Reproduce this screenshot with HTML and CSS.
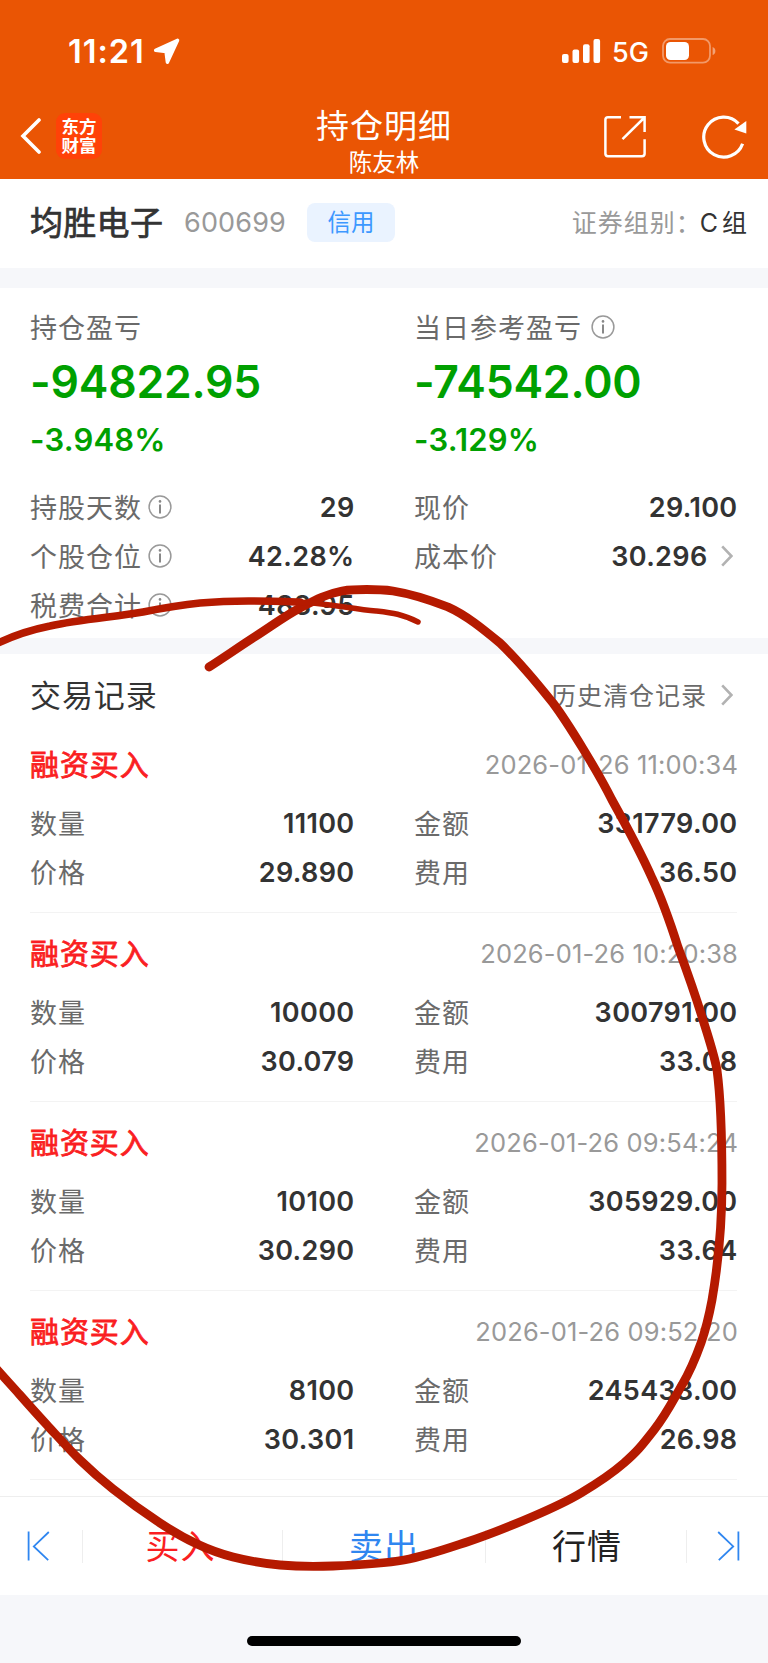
FILE: index.html
```
<!DOCTYPE html>
<html lang="zh-CN">
<head>
<meta charset="utf-8">
<meta name="viewport" content="width=768">
<title>持仓明细</title>
<link rel="stylesheet" href="styles.css">
</head>
<body>

<svg class="defs" width="0" height="0">
  <symbol id="info" viewBox="0 0 24 24">
    <circle cx="12" cy="12" r="10.9" fill="none" stroke="#999" stroke-width="1.5"/>
    <circle cx="12" cy="6.4" r="1.3" fill="#888"/>
    <path d="M12 9.6V18.6" stroke="#888" stroke-width="2"/>
  </symbol>
  <symbol id="arrow" viewBox="0 0 12 22">
    <path d="M1.2 1.4L10.4 11L1.2 20.6" fill="none" stroke="#b2b2b2" stroke-width="2.6"/>
  </symbol>
</svg>

<header class="header">
  <div class="status">
    <span class="time">11:21</span>
    <svg class="location" width="27" height="27" viewBox="0 0 27 27"><path d="M24.6 2.2L2.6 12.2L13 13.6L14.4 24.2Z" fill="#fff" stroke="#fff" stroke-width="3.4" stroke-linejoin="round"/></svg>
    <svg class="signal" width="39" height="25" viewBox="0 0 39 25" fill="#fff">
      <rect x="0" y="15" width="6.6" height="9" rx="2"/>
      <rect x="10.5" y="10.4" width="6.6" height="13.6" rx="2"/>
      <rect x="21" y="5.2" width="6.6" height="18.8" rx="2"/>
      <rect x="31.5" y="0" width="6.6" height="24" rx="2"/>
    </svg>
    <span class="network">5G</span>
    <svg class="battery" width="55" height="26" viewBox="0 0 55 26">
      <rect x="1" y="1" width="47" height="23.6" rx="7" fill="none" stroke="#fff" stroke-opacity=".4" stroke-width="1.8"/>
      <rect x="4" y="4" width="23" height="18" rx="4.5" fill="#fff"/>
      <path d="M50.6 9Q53.4 10 53.4 13Q53.4 16 50.6 17Z" fill="#fff" fill-opacity=".45"/>
    </svg>
  </div>
  <div class="navbar">
    <div class="nav-left">
      <svg width="22" height="36" viewBox="0 0 22 36"><path d="M19 2L3 18L19 34" fill="none" stroke="#fff" stroke-width="3.6" stroke-linecap="round"/></svg>
      <div class="logo"><span>东方</span><span>财富</span></div>
    </div>
    <div class="nav-title">
      <h1>持仓明细</h1>
      <p>陈友林</p>
    </div>
    <div class="nav-right">
      <svg width="44" height="44" viewBox="0 0 44 44" fill="none" stroke="#fff" stroke-width="2.5"><path d="M18 2.2H5Q2.4 2.2 2.4 4.8V38.8Q2.4 41.2 5 41.2H39Q41.6 41.2 41.6 38.8V24.2M26.5 2.2H41.6V17M41 3L19.5 24.2"/></svg>
      <svg width="46" height="46" viewBox="0 0 46 46"><path d="M36.5 9.6A20 20 0 1 0 40.6 29.8" fill="none" stroke="#fff" stroke-width="3.2"/><path d="M44.3 7V19.4L32.4 15.4Z" fill="#fff"/></svg>
    </div>
  </div>
</header>

<section class="stock">
  <h2>均胜电子</h2>
  <span class="code">600699</span>
  <span class="badge">信用</span>
  <span class="group">证券组别：</span>
  <span class="group-value">C 组</span>
</section>

<section class="summary">
  <div class="col">
    <div class="label">持仓盈亏</div>
    <div class="profit">-94822.95</div>
    <div class="percent">-3.948%</div>
    <div class="row"><span class="label">持股天数<svg class="info"><use href="#info"/></svg></span><b>29</b></div>
    <div class="row"><span class="label">个股仓位<svg class="info"><use href="#info"/></svg></span><b>42.28%</b></div>
    <div class="row"><span class="label">税费合计<svg class="info"><use href="#info"/></svg></span><b>488.95</b></div>
  </div>
  <div class="col">
    <div class="label day">当日参考盈亏<svg class="info"><use href="#info"/></svg></div>
    <div class="profit">-74542.00</div>
    <div class="percent">-3.129%</div>
    <div class="row"><span class="label">现价</span><b>29.100</b></div>
    <div class="row"><span class="label">成本价</span><b>30.296</b><svg class="arrow"><use href="#arrow"/></svg></div>
  </div>
</section>

<section class="records">
  <div class="records-head">
    <h3>交易记录</h3>
    <span class="history">历史清仓记录</span>
    <svg class="arrow"><use href="#arrow"/></svg>
  </div>

  <div class="record">
    <div class="record-head"><h4>融资买入</h4><time>2026-01-26 11:00:34</time></div>
    <div class="record-body">
      <div class="row"><span class="label">数量</span><b>11100</b></div>
      <div class="row"><span class="label">金额</span><b>331779.00</b></div>
      <div class="row"><span class="label">价格</span><b>29.890</b></div>
      <div class="row"><span class="label">费用</span><b>36.50</b></div>
    </div>
  </div>

  <div class="record">
    <div class="record-head"><h4>融资买入</h4><time>2026-01-26 10:20:38</time></div>
    <div class="record-body">
      <div class="row"><span class="label">数量</span><b>10000</b></div>
      <div class="row"><span class="label">金额</span><b>300791.00</b></div>
      <div class="row"><span class="label">价格</span><b>30.079</b></div>
      <div class="row"><span class="label">费用</span><b>33.08</b></div>
    </div>
  </div>

  <div class="record">
    <div class="record-head"><h4>融资买入</h4><time>2026-01-26 09:54:24</time></div>
    <div class="record-body">
      <div class="row"><span class="label">数量</span><b>10100</b></div>
      <div class="row"><span class="label">金额</span><b>305929.00</b></div>
      <div class="row"><span class="label">价格</span><b>30.290</b></div>
      <div class="row"><span class="label">费用</span><b>33.64</b></div>
    </div>
  </div>

  <div class="record">
    <div class="record-head"><h4>融资买入</h4><time>2026-01-26 09:52:20</time></div>
    <div class="record-body">
      <div class="row"><span class="label">数量</span><b>8100</b></div>
      <div class="row"><span class="label">金额</span><b>245433.00</b></div>
      <div class="row"><span class="label">价格</span><b>30.301</b></div>
      <div class="row"><span class="label">费用</span><b>26.98</b></div>
    </div>
  </div>
</section>

<nav class="tabs">
  <a class="prev"><svg width="24" height="30" viewBox="0 0 24 30" fill="none" stroke="#2f86f0" stroke-width="1.8"><path d="M1.6 .5V29.5M21.8 1L6.8 15.4L21.2 29.2"/></svg></a>
  <a class="buy">买入</a>
  <a class="sell">卖出</a>
  <a class="quote">行情</a>
  <a class="next"><svg width="24" height="30" viewBox="0 0 24 30" fill="none" stroke="#2f86f0" stroke-width="1.8"><path d="M22.4 .5V29.5M2.2 1L17.2 15.4L2.8 29.2"/></svg></a>
</nav>

<footer class="home"><span class="home-bar"></span></footer>

<!-- pen mark over the records -->
<svg class="pen" width="768" height="1663" viewBox="0 0 768 1663">
  <path class="thick" d="M209 667C220 660 240.8 645.8 256 636S286 615.3 300 608S326 594 342 591C355 589 378 589 393 591C412 594 430 600 448 607C466 615 483 629 500 643C520 662 537 683 553 703C568 723 598 772 612 800C627 827 641 853 652 878C663 901 670 922 678 947C688 974 696 997 703 1020C710 1042 714 1054 717 1070C721 1100 722 1150 722 1183C722 1220 718 1265 712 1300C709 1316 706 1329 701 1343C696 1357 690.8 1370 682 1385S666.7 1413.7 654 1430S637.2 1451.5 624 1463S596 1484 581 1493S553 1507.8 534 1516S488.7 1534.8 467 1542S426.3 1556 404 1560S353.7 1565.2 333 1566S296.7 1566.5 280 1565S246.8 1560.5 233 1557S209.2 1549.7 197 1544S174 1532.2 160 1523S126.3 1499.5 113 1489S91 1470.7 80 1460S57 1435.8 47 1425S28.8 1405 20 1395S0 1373 -6 1366"/>
  <path class="mid" d="M-6 645C10 637 30 630 50 626C80 619 115 617 143 612C163 608 180 605 200 603C235 600 265 601 300 602"/>
  <path class="thin" d="M290 602C325 602 350 609 376 611C393 613 402 614 418 622"/>
</svg>

</body>
</html>
```
FILE: styles.css
```
* {
  box-sizing: border-box;
  margin: 0;
  padding: 0;
}

body {
  position: relative;
  width: 768px;
  height: 1663px;
  overflow: hidden;
  background: #f6f7fa;
  color: #333;
  font-family: Inter, "Noto Sans CJK SC", sans-serif;
  font-size: 27px;
}

svg {
  display: block;
  flex: none;
}

.defs {
  position: absolute;
}

/* header */
.header {
  height: 179px;
  background: #ea5504;
  color: #fff;
}

.status {
  display: flex;
  align-items: center;
  height: 102px;
  padding: 0 51px 0 68px;
}

.time {
  width: 77px;
  padding-top: 1px;
  font-size: 32.5px;
  font-weight: 600;
  letter-spacing: 1px;
}

.location {
  margin-left: 8px;
}

.signal {
  margin-left: auto;
}

.network {
  width: 49px;
  padding: 2px 0 0 11px;
  font-weight: 500;
  font-size: 27px;
}

.battery {
  margin-left: 12px;
}

.navbar {
  display: grid;
  grid-template-columns: 1fr 200px 1fr;
  height: 77px;
}

.nav-left {
  display: flex;
  align-items: center;
  gap: 14px;
  height: 68px;
  padding-left: 20px;
}

.logo {
  display: flex;
  flex-direction: column;
  align-items: center;
  justify-content: center;
  width: 46px;
  height: 46px;
  padding-bottom: 1px;
  border-radius: 9px;
  background: #ff4208;
  font-size: 17.5px;
  font-weight: 700;
  line-height: 19px;
}

.nav-title {
  padding-top: 1px;
  text-align: center;
}

.nav-title h1 {
  font-size: 33px;
  font-weight: 400;
  line-height: 46px;
  letter-spacing: 1px;
  white-space: nowrap;
}

.nav-title p {
  font-size: 23.5px;
  line-height: 28px;
}

.nav-right {
  display: flex;
  justify-content: flex-end;
  align-items: center;
  gap: 55px;
  height: 69px;
  padding-right: 20px;
}

/* stock name */
.stock {
  display: flex;
  align-items: center;
  height: 89px;
  padding: 0 21px 3px 30px;
  background: #fff;
}

.stock h2 {
  width: 154px;
  padding-bottom: 2px;
  font-size: 33px;
  font-weight: 400;
  letter-spacing: .3px;
  -webkit-text-stroke: .7px;
}

.code {
  width: 123px;
  color: #999;
  letter-spacing: .15px;
}

.badge {
  width: 88px;
  height: 39px;
  border-radius: 8px;
  background: #eaf3ff;
  color: #3d98ff;
  font-size: 23.5px;
  line-height: 40px;
  text-align: center;
}

.group {
  margin: 0 -2px 0 auto;
  padding-bottom: 2px;
  color: #999;
  font-size: 25px;
  letter-spacing: 1px;
  white-space: nowrap;
}

.group-value {
  padding-bottom: 2px;
  font-size: 25px;
  word-spacing: -3px;
  white-space: nowrap;
}

/* profit and loss */
.summary {
  display: grid;
  grid-template-columns: 324px 323px;
  column-gap: 60px;
  height: 350px;
  margin-top: 20px;
  padding: 15px 31px 0 30px;
  background: #fff;
}

.label {
  display: flex;
  align-items: center;
  height: 49px;
  padding-bottom: 3px;
  color: #6a6a6a;
  letter-spacing: 1px;
  white-space: nowrap;
}

.info {
  width: 24px;
  height: 24px;
  margin: 2px 0 0 6px;
}

.day .info {
  margin-left: 9px;
}

.profit {
  height: 60px;
  color: #00a000;
  font-size: 44.5px;
  font-weight: 600;
  line-height: 60px;
  letter-spacing: -.2px;
}

.percent {
  height: 71px;
  color: #00a000;
  font-size: 31px;
  font-weight: 600;
  line-height: 56px;
  letter-spacing: .2px;
}

.row {
  display: flex;
  align-items: center;
  height: 49px;
}

.row b {
  margin: 0 -.5px 0 auto;
  font-weight: 600;
  letter-spacing: .35px;
}

.arrow {
  width: 12px;
  height: 22px;
  margin: 0 4px 2px 14px;
}

/* trade records */
.records {
  height: 842px;
  margin-top: 16px;
  padding: 0 31px 0 30px;
  background: #fff;
}

.records-head {
  display: flex;
  align-items: center;
  height: 70px;
  padding-top: 12px;
}

.records-head h3 {
  padding-bottom: 3px;
  font-size: 31px;
  font-weight: 400;
  letter-spacing: .9px;
}

.history {
  margin-left: auto;
  padding-bottom: 2px;
  color: #6a6a6a;
  font-size: 25px;
  letter-spacing: 1px;
}

.records-head .arrow {
  margin-bottom: 0;
}

.record {
  height: 189px;
  padding-top: 15px;
  border-bottom: 1px solid #f3f3f3;
}

.record-head {
  display: flex;
  align-items: center;
  justify-content: space-between;
  height: 50px;
  margin-bottom: 10px;
}

.record-head h4 {
  padding-bottom: 3px;
  color: #fa1e22;
  font-size: 29px;
  font-weight: 400;
  letter-spacing: .9px;
  -webkit-text-stroke: .8px;
}

.record-head time {
  margin-right: -1px;
  color: #999;
  font-size: 25.5px;
  letter-spacing: .15px;
}

.record-body {
  display: grid;
  grid-template-columns: 324px 323px;
  column-gap: 60px;
}

/* bottom bar */
.tabs {
  display: grid;
  grid-template-columns: 83px 200px 203px 201px 81px;
  align-items: center;
  height: 99px;
  border-top: 1px solid #eee;
  background: #fff;
  font-size: 34px;
}

.tabs a {
  display: flex;
  align-items: center;
  justify-content: center;
  height: 33px;
  padding-bottom: 4px;
  border-right: 1px solid #eee;
  letter-spacing: 1px;
}

.tabs .prev {
  justify-content: flex-start;
  padding: 0 0 0 27px;
}

.tabs .next {
  justify-content: flex-end;
  padding: 0 28px 0 0;
  border: none;
}

.tabs .buy {
  padding-right: 4px;
  color: #fa1e22;
}

.sell {
  color: #2f86f0;
}

.tabs .quote {
  padding-left: 2px;
  color: #222;
}

.home {
  display: flex;
  justify-content: center;
  padding-top: 41px;
}

.home-bar {
  width: 274px;
  height: 10px;
  border-radius: 5px;
  background: #000;
}

.pen {
  position: absolute;
  top: 0;
  left: 0;
  fill: none;
  stroke: #b51a00;
  stroke-linecap: round;
  stroke-linejoin: round;
}

.thick {
  stroke-width: 8.8px;
}

.mid {
  stroke-width: 7.5px;
}

.thin {
  stroke-width: 5.5px;
}
```
